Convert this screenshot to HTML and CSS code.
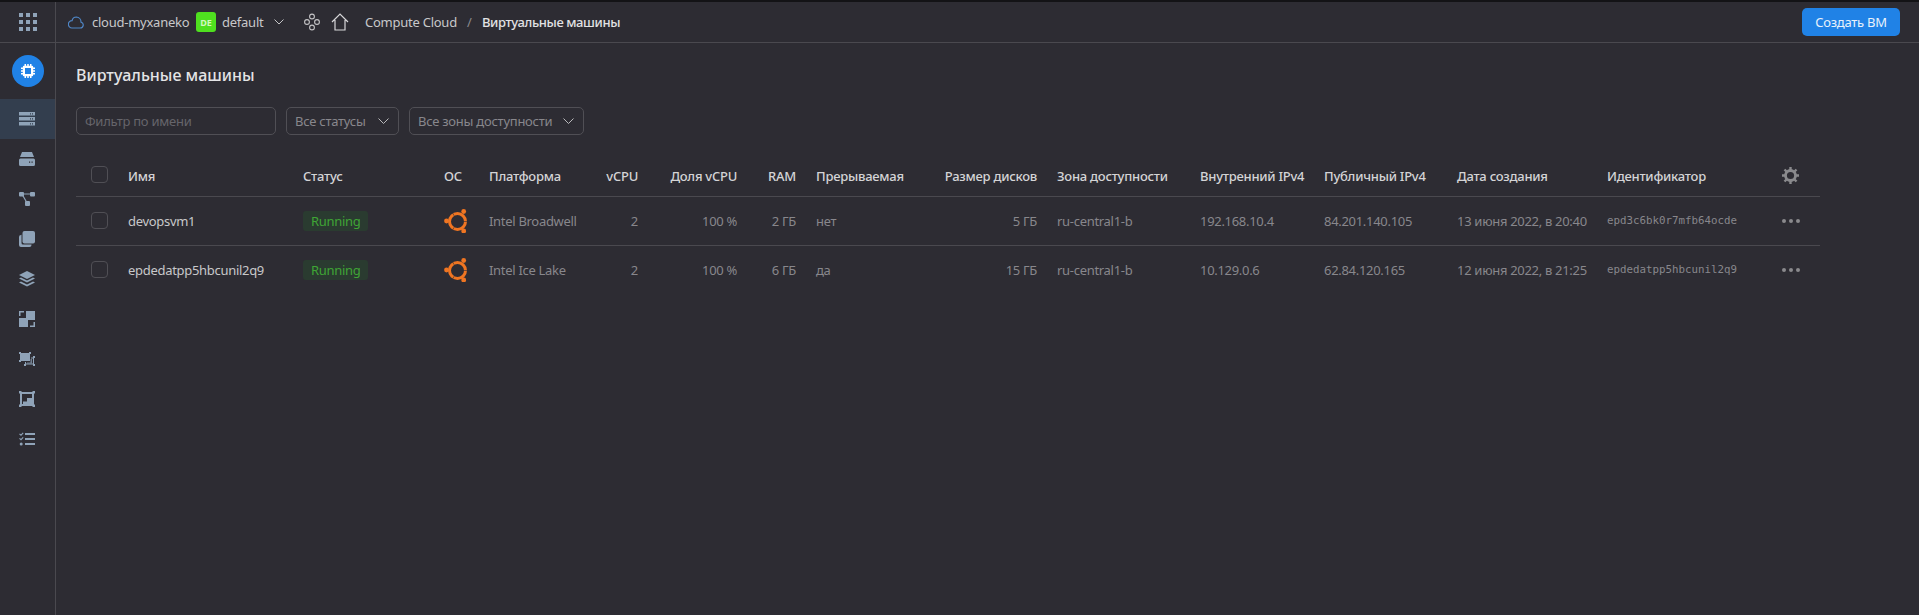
FILE: index.html
```html
<!DOCTYPE html>
<html lang="ru">
<head>
  <meta charset="UTF-8" />
  <title>Виртуальные машины</title>
  <link rel="stylesheet" href="styles.css">
</head>
<body>
  <svg class="defs" width="0" height="0">
    <symbol id="ubuntu" viewBox="0 0 23 24">
      <circle cx="13.5" cy="12.5" r="8" fill="none" stroke="#ef7522" stroke-width="3"/>
      <path d="M20 12.500h4M10.200 18.200l-2 3.500M10.200 6.800l-2-3.500" stroke="#2d2c33" stroke-width=".6"/>
      <circle cx="2.500" cy="12" r="2.400" fill="#ef7522"/>
      <circle cx="19.700" cy="2.500" r="2.400" fill="#ef7522"/>
      <circle cx="19.700" cy="22" r="2.400" fill="#ef7522"/>
    </symbol>
  </svg>

  <header class="topbar">
    <div class="apps">
      <svg width="18" height="18" viewBox="0 0 18 18" fill="#8fa3b8">
        <rect x="0" y="0" width="4" height="4"/><rect x="7" y="0" width="4" height="4"/><rect x="14" y="0" width="4" height="4"/>
        <rect x="0" y="7" width="4" height="4"/><rect x="7" y="7" width="4" height="4"/><rect x="14" y="7" width="4" height="4"/>
        <rect x="0" y="14" width="4" height="4"/><rect x="7" y="14" width="4" height="4"/><rect x="14" y="14" width="4" height="4"/>
      </svg>
    </div>
    <div class="crumbs">
      <svg class="cloud" width="16" height="13" viewBox="0 0 16 13" fill="none" stroke="#4f86c6" stroke-width="1.2">
        <path d="M4 12h8.200a3 3 0 0 0 .8-5.900A5 5 0 0 0 8.400 1a4.600 4.600 0 0 0-4.300 3.600A3.700 3.700 0 0 0 4 12z"/>
      </svg>
      <span class="cloud-name">cloud-myxaneko</span>
      <span class="badge-de">DE</span>
      <span class="folder">default</span>
      <svg class="chev folder-chev" width="10" height="6" viewBox="0 0 10 6" fill="none" stroke="#c4c4c6"><path d="M.5.5 5 5 9.500.5"/></svg>
      <svg class="nodes" width="16" height="18" viewBox="0 0 16 18" fill="none" stroke="#c4c4c6" stroke-width="1.1">
        <circle cx="8" cy="3.500" r="2.400"/><circle cx="3" cy="9" r="2.400"/><circle cx="13" cy="9" r="2.400"/><circle cx="8" cy="14.500" r="2.400"/>
      </svg>
      <svg class="home" width="18" height="18" viewBox="0 0 18 18" fill="none" stroke="#d8d8da" stroke-width="1.2">
        <path d="M1 9 9 1l8 8M4 7v10h10V7"/>
      </svg>
      <span class="service">Compute Cloud</span>
      <span class="slash">/</span>
      <span class="current">Виртуальные машины</span>
    </div>
    <button class="btn-create">Создать ВМ</button>
  </header>

  <div class="layout">
    <nav class="sidebar">
      <div class="logo">
        <svg width="14" height="14" viewBox="0 0 14 14" fill="#fff">
          <path fill-rule="evenodd" d="M3 1.800h8A1.200 1.200 0 0 1 12.200 3v8a1.200 1.200 0 0 1-1.200 1.200H3A1.200 1.200 0 0 1 1.800 11V3A1.200 1.200 0 0 1 3 1.800zM4 4v6h6V4z"/>
          <path d="M3.500 0h1.500v2H3.500zM6.250 0h1.500v2h-1.500zM9 0h1.500v2H9zM3.500 12h1.500v2H3.500zM6.250 12h1.500v2h-1.500zM9 12h1.500v2H9zM0 3.500h2V5H0zM0 6.250h2v1.500H0zM0 9h2v1.500H0zM12 3.500h2V5h-2zM12 6.250h2v1.500h-2zM12 9h2v1.500h-2z"/>
        </svg>
      </div>
      <a class="side-item active">
        <svg width="16" height="14" viewBox="0 0 16 14" fill="#8fa3b8">
          <path fill-rule="evenodd" d="M0 0h16v3.600H0zM0 5h16v3.600H0zM0 10h16v3.600H0zM11 1.200v1.200h1V1.200zM13 1.200v1.200h1V1.200zM11 6.200v1.200h1V6.200zM13 6.200v1.200h1V6.200zM11 11.200v1.200h1v-1.200zM13 11.200v1.200h1v-1.200z"/>
        </svg>
      </a>
      <a class="side-item">
        <svg width="16" height="14" viewBox="0 0 16 14" fill="#8fa3b8">
          <path d="M3 0h10l2 5H1z"/>
          <path fill-rule="evenodd" d="M1.500 6.500h13A1.500 1.500 0 0 1 16 8v4.500a1.500 1.500 0 0 1-1.500 1.500h-13A1.500 1.500 0 0 1 0 12.500V8a1.500 1.500 0 0 1 1.500-1.500zM10 9.500v1.200h1.200V9.500zM12.500 9.500v1.200h1.200V9.500z"/>
        </svg>
      </a>
      <a class="side-item">
        <svg width="16" height="14" viewBox="0 0 16 14" fill="#8fa3b8">
          <rect x="0" y="0" width="5" height="4.500" rx="1"/><rect x="11" y="0" width="5" height="4.500" rx="1"/><rect x="6" y="9" width="5" height="5" rx="1"/>
          <path d="M4 2h8M3.500 3l4 7" stroke="#8fa3b8" stroke-width="1.2"/>
        </svg>
      </a>
      <a class="side-item">
        <svg width="16" height="16" viewBox="0 0 16 16" fill="#8fa3b8">
          <rect x="3.500" y="0" width="12.500" height="12.500" rx="2"/>
          <path d="M2.500 3.500v8.500a1.500 1.500 0 0 0 1.500 1.500h8.500v.5a2 2 0 0 1-2 2H2a2 2 0 0 1-2-2V6a2 2 0 0 1 2-2z"/>
        </svg>
      </a>
      <a class="side-item">
        <svg width="16" height="16" viewBox="0 0 16 16" fill="#8fa3b8">
          <path d="M8 0l8 4-8 4-8-4z"/><path d="M2 6.500l6 3 6-3 2 1-8 4-8-4z"/><path d="M2 10.500l6 3 6-3 2 1-8 4-8-4z"/>
        </svg>
      </a>
      <a class="side-item">
        <svg width="16" height="16" viewBox="0 0 16 16" fill="#8fa3b8">
          <rect x="7" y="0" width="9" height="9"/><rect x="0" y="7" width="9" height="9"/>
          <path d="M0 5V0h5v1.500H1.500V5zM16 11v5h-5v-1.500h3.500V11z"/>
        </svg>
      </a>
      <a class="side-item">
        <svg width="16" height="14" viewBox="0 0 16 14" fill="#8fa3b8">
          <rect x="1" y="1" width="10" height="8"/>
          <path d="M0 0h2v2H0zM10 0h2v2h-2zM0 8h2v2H0z"/>
          <path d="M12 5.500h3v7H6v-2.500h1v1.500h7v-5h-2z"/>
          <path d="M8 10.500h3.500V7H13v4.500H8z" opacity=".7"/>
          <path d="M14 4h2v2h-2zM14 12h2v2h-2zM5 12h2v2H5z"/>
        </svg>
      </a>
      <a class="side-item">
        <svg width="16" height="16" viewBox="0 0 16 16" fill="#8fa3b8">
          <path fill-rule="evenodd" d="M1 1h14v14H1zM3 3v10h10V3z"/>
          <path d="M0 0h2.500v2.500H0zM13.500 0H16v2.500h-2.500zM0 13.500h2.500V16H0zM13.500 13.500H16V16h-2.500z"/>
          <path d="M8 7h5v6H4v-2.500h4z"/>
        </svg>
      </a>
      <a class="side-item">
        <svg width="16" height="14" viewBox="0 0 16 14" fill="#8fa3b8">
          <rect x="6" y="1" width="10" height="2"/><rect x="6" y="6" width="10" height="2"/><rect x="6" y="11" width="10" height="2"/>
          <path d="M.5 1.800 2 3.200 4.200.8M.5 6.300 2 7.700 4.200 5.300" fill="none" stroke="#8fa3b8" stroke-width="1.100"/>
          <circle cx="2.200" cy="12" r="1.500"/>
        </svg>
      </a>
    </nav>

    <main class="content">
      <h1 class="page-title">Виртуальные машины</h1>

      <div class="filters">
        <input class="filter-input" type="text" placeholder="Фильтр по имени" />
        <div class="select select-status">
          <span>Все статусы</span>
          <svg class="chev" width="11" height="6" viewBox="0 0 11 6" fill="none" stroke="#b9b9bb"><path d="M.5.5l5 5 5-5"/></svg>
        </div>
        <div class="select select-zone">
          <span>Все зоны доступности</span>
          <svg class="chev" width="11" height="6" viewBox="0 0 11 6" fill="none" stroke="#b9b9bb"><path d="M.5.5l5 5 5-5"/></svg>
        </div>
      </div>

      <table class="vm-table">
        <colgroup>
          <col class="w-check"><col class="w-name"><col class="w-status"><col class="w-os"><col class="w-platform">
          <col class="w-vcpu"><col class="w-share"><col class="w-ram"><col class="w-preempt"><col class="w-disk">
          <col class="w-zone"><col class="w-ip-in"><col class="w-ip-out"><col class="w-date"><col class="w-id"><col class="w-actions">
        </colgroup>
        <thead>
          <tr>
            <th><span class="checkbox"></span></th>
            <th>Имя</th>
            <th>Статус</th>
            <th>ОС</th>
            <th>Платформа</th>
            <th class="num">vCPU</th>
            <th class="num">Доля vCPU</th>
            <th class="num">RAM</th>
            <th>Прерываемая</th>
            <th class="num">Размер дисков</th>
            <th>Зона доступности</th>
            <th>Внутренний IPv4</th>
            <th>Публичный IPv4</th>
            <th>Дата создания</th>
            <th>Идентификатор</th>
            <th>
              <svg class="gear" width="17" height="17" viewBox="0 0 17 17">
                <circle cx="8.500" cy="8.500" r="5" fill="none" stroke="#8a8a8d" stroke-width="2.800"/>
                <path d="M8.500 0v3.500M8.500 13.500V17M0 8.500h3.500M13.500 8.500H17M2.500 2.500l2.500 2.500M12 12l2.500 2.500M14.500 2.500 12 5M5 12l-2.500 2.500" stroke="#8a8a8d" stroke-width="2.400"/>
              </svg>
            </th>
          </tr>
        </thead>
        <tbody>
          <tr>
            <td><span class="checkbox"></span></td>
            <td class="name">devopsvm1</td>
            <td><span class="status">Running</span></td>
            <td><svg class="os-icon" width="23" height="24"><use href="#ubuntu"/></svg></td>
            <td>Intel Broadwell</td>
            <td class="num">2</td>
            <td class="num">100 %</td>
            <td class="num">2 ГБ</td>
            <td>нет</td>
            <td class="num">5 ГБ</td>
            <td>ru-central1-b</td>
            <td>192.168.10.4</td>
            <td>84.201.140.105</td>
            <td>13 июня 2022, в 20:40</td>
            <td class="mono">epd3c6bk0r7mfb64ocde</td>
            <td><span class="dots"><i></i><i></i><i></i></span></td>
          </tr>
          <tr>
            <td><span class="checkbox"></span></td>
            <td class="name">epdedatpp5hbcunil2q9</td>
            <td><span class="status">Running</span></td>
            <td><svg class="os-icon" width="23" height="24"><use href="#ubuntu"/></svg></td>
            <td>Intel Ice Lake</td>
            <td class="num">2</td>
            <td class="num">100 %</td>
            <td class="num">6 ГБ</td>
            <td>да</td>
            <td class="num">15 ГБ</td>
            <td>ru-central1-b</td>
            <td>10.129.0.6</td>
            <td>62.84.120.165</td>
            <td>12 июня 2022, в 21:25</td>
            <td class="mono">epdedatpp5hbcunil2q9</td>
            <td><span class="dots"><i></i><i></i><i></i></span></td>
          </tr>
        </tbody>
      </table>
    </main>
  </div>
</body>
</html>
```

FILE: styles.css
```css
* { box-sizing: border-box; }
html, body { height: 100%; }
body { margin: 0; background: #2d2c33; color: #d8d8da; font-family: "Noto Sans", sans-serif; font-size: 13px; letter-spacing: -0.25px; overflow: hidden; display: flex; flex-direction: column; border-top: 2px solid #131316; }
.defs { position: absolute; }

.topbar { height: 41px; flex: none; display: flex; align-items: center; border-bottom: 1px solid #4a494f; padding-right: 19px; }
.apps { width: 56px; height: 100%; flex: none; display: flex; align-items: center; padding-left: 19px; border-right: 1px solid #4a494f; }
.crumbs { flex: 1; display: flex; align-items: center; padding-left: 12px; }
.cloud-name { margin-left: 8px; width: 104px; color: #c8c8ca; }
.badge-de { width: 20px; height: 20px; border-radius: 3px; background: #4fe01f; color: #d2f7c0; font-size: 9px; font-weight: 700; letter-spacing: 0; display: flex; align-items: center; justify-content: center; }
.folder { margin-left: 6px; width: 52px; color: #c8c8ca; }
.folder-chev { flex: none; }
.nodes { margin-left: 20px; }
.home { margin-left: 11px; }
.service { margin-left: 16px; width: 102px; color: #c8c8ca; }
.slash { width: 15px; color: #8a8a8d; }
.current { color: #e2e2e4; font-weight: 500; letter-spacing: -0.4px; }
.btn-create { width: 98px; height: 28px; margin-top: -1px; border: 0; border-radius: 5px; background: #2082e6; color: #e8f1fb; font-family: inherit; font-size: 13px; letter-spacing: inherit; }

.layout { flex: 1; display: flex; min-height: 0; }
.sidebar { width: 56px; flex: none; border-right: 1px solid #4a494f; padding-top: 12px; }
.logo { width: 32px; height: 32px; margin: 0 0 12px 12px; border-radius: 50%; background: #2082e6; display: flex; align-items: center; justify-content: center; }
.side-item { height: 40px; display: flex; align-items: center; justify-content: center; padding-right: 1px; }
.side-item.active { background: #333e4e; }

.content { flex: 1; padding: 20px 0 0 20px; min-width: 0; }
.page-title { margin: 0; font-size: 16px; line-height: 24px; font-weight: 500; letter-spacing: 0; color: #e4e4e6; }

.filters { display: flex; gap: 10px; margin-top: 20px; height: 28px; }
.filter-input, .select { height: 28px; border: 1px solid #504f55; border-radius: 5px; background: transparent; font-family: inherit; font-size: 13px; letter-spacing: inherit; }
.filter-input { width: 200px; padding: 0 8px; outline: none; }
.filter-input::placeholder { color: #66656b; opacity: 1; }
.select { display: flex; align-items: center; justify-content: space-between; padding: 0 9px 0 8px; color: #88878c; }
.select-status { width: 113px; }
.select-zone { width: 175px; }

.vm-table { margin-top: 21px; width: 1744px; table-layout: fixed; border-collapse: collapse; }
.w-check { width: 42px; } .w-name { width: 175px; } .w-status { width: 141px; } .w-os { width: 45px; }
.w-platform { width: 111px; } .w-vcpu { width: 58px; } .w-share { width: 99px; } .w-ram { width: 59px; }
.w-preempt { width: 104px; } .w-disk { width: 137px; } .w-zone { width: 143px; } .w-ip-in { width: 124px; }
.w-ip-out { width: 133px; } .w-date { width: 150px; } .w-id { width: 175px; } .w-actions { width: 48px; }

.vm-table th, .vm-table td { padding: 0 10px; text-align: left; white-space: nowrap; }
.vm-table th { height: 40px; font-weight: 500; color: #d4d4d6; border-bottom: 1px solid #4a494f; }
.vm-table td { height: 49px; color: #88878c; letter-spacing: -0.3px; }
.vm-table tbody tr:first-child td { border-bottom: 1px solid #4a494f; }
.vm-table th:first-child, .vm-table td:first-child { padding: 0 0 0 15px; }
.vm-table .num { text-align: right; }
.vm-table .name { color: #c8c8ca; }
.vm-table .mono { font-family: "DejaVu Sans Mono", monospace; font-size: 10.800px; letter-spacing: 0; }

.checkbox { display: block; width: 17px; height: 17px; border: 1px solid #504f55; border-radius: 4px; margin-top: -2px; }
td .checkbox { margin-top: 0; }
.status { display: inline-block; padding: 0 8px; height: 20px; line-height: 20px; border-radius: 3px; background: #2a3b30; color: #3fa535; }
.os-icon { display: block; }
.gear { display: block; }
.dots { display: flex; gap: 3px; }
.dots i { width: 4px; height: 4px; border-radius: 50%; background: #8a8a8d; }
```
